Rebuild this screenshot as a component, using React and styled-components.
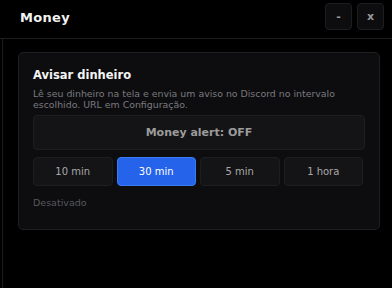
import React, { useState } from 'react';
import styled, { createGlobalStyle } from 'styled-components';

const Global = createGlobalStyle`
  html, body { margin: 0; padding: 0; background: #000; }
  body { font-family: "DejaVu Sans", "Noto Sans", sans-serif; color: #fff; }
  * { box-sizing: border-box; }
`;

const Window = styled.div`
  width: 392px;
  height: 288px;
  background: #000;
  display: flex;
  flex-direction: column;
  overflow: hidden;
`;

const Header = styled.div`
  height: 39px;
  display: flex;
  align-items: flex-start;
  justify-content: space-between;
  padding: 3px 8px 0 20px;
  border-bottom: 1px solid #1c1c1e;
`;

const Title = styled.h1`
  margin: 0;
  padding-top: 7px;
  font-size: 13px;
  font-weight: 700;
  letter-spacing: 0.3px;
  color: #f2f2f2;
`;

const Controls = styled.div`
  display: flex;
  gap: 5px;
`;

const WinButton = styled.button`
  width: 27px;
  height: 27px;
  border-radius: 4px;
  border: 1px solid #1e1e20;
  background: #0d0d0f;
  color: #9a9a9a;
  font-family: inherit;
  font-size: 11px;
  font-weight: 700;
  padding: 0;
  cursor: pointer;
`;

const Body = styled.div`
  flex: 1;
  margin-left: 2px;
  border-left: 1px solid #1c1c1e;
  padding: 13px 12px 0 15px;
`;

const Card = styled.section`
  background: #0d0d10;
  border: 1px solid #1f1f22;
  border-radius: 5px;
  padding: 15px 14px 21px 14px;
  display: flex;
  flex-direction: column;
`;

const CardTitle = styled.h2`
  margin: 0 0 6px;
  font-size: 11.5px;
  font-weight: 700;
  color: #f4f4f4;
`;

const Desc = styled.p`
  margin: 0 0 5px;
  font-size: 9.4px;
  line-height: 11px;
  color: #7a7a7e;
`;

const Toggle = styled.button`
  height: 35px;
  width: 100%;
  border: 1px solid #1e1e21;
  border-radius: 4px;
  background: #141416;
  color: #9c9c9c;
  font-family: inherit;
  font-size: 11px;
  font-weight: 700;
  cursor: pointer;
`;

const Intervals = styled.div`
  display: grid;
  grid-template-columns: repeat(4, 1fr);
  gap: 4px;
  margin: 7px 2px 0 0;
`;

const Interval = styled.button`
  height: 29px;
  border-radius: 4px;
  border: 1px solid ${p => (p.$active ? '#3b7cf5' : '#1e1e21')};
  background: ${p => (p.$active ? '#2563eb' : '#141416')};
  color: ${p => (p.$active ? '#ffffff' : '#a8a8a8')};
  font-family: inherit;
  font-size: 10px;
  cursor: pointer;
`;

const Status = styled.div`
  margin-top: 11px;
  font-size: 9.5px;
  color: #58585c;
`;

const options = ['10 min', '30 min', '5 min', '1 hora'];

export default function App() {
  const [sel, setSel] = useState('30 min');
  return (
    <Window>
      <Global />
      <Header>
        <Title>Money</Title>
        <Controls>
          <WinButton>-</WinButton>
          <WinButton>x</WinButton>
        </Controls>
      </Header>
      <Body>
        <Card>
          <CardTitle>Avisar dinheiro</CardTitle>
          <Desc>
            Lê seu dinheiro na tela e envia um aviso no Discord no intervalo escolhido. URL em Configuração.
          </Desc>
          <Toggle>Money alert: OFF</Toggle>
          <Intervals>
            {options.map(o => (
              <Interval key={o} $active={o === sel} onClick={() => setSel(o)}>
                {o}
              </Interval>
            ))}
          </Intervals>
          <Status>Desativado</Status>
        </Card>
      </Body>
    </Window>
  );
}
